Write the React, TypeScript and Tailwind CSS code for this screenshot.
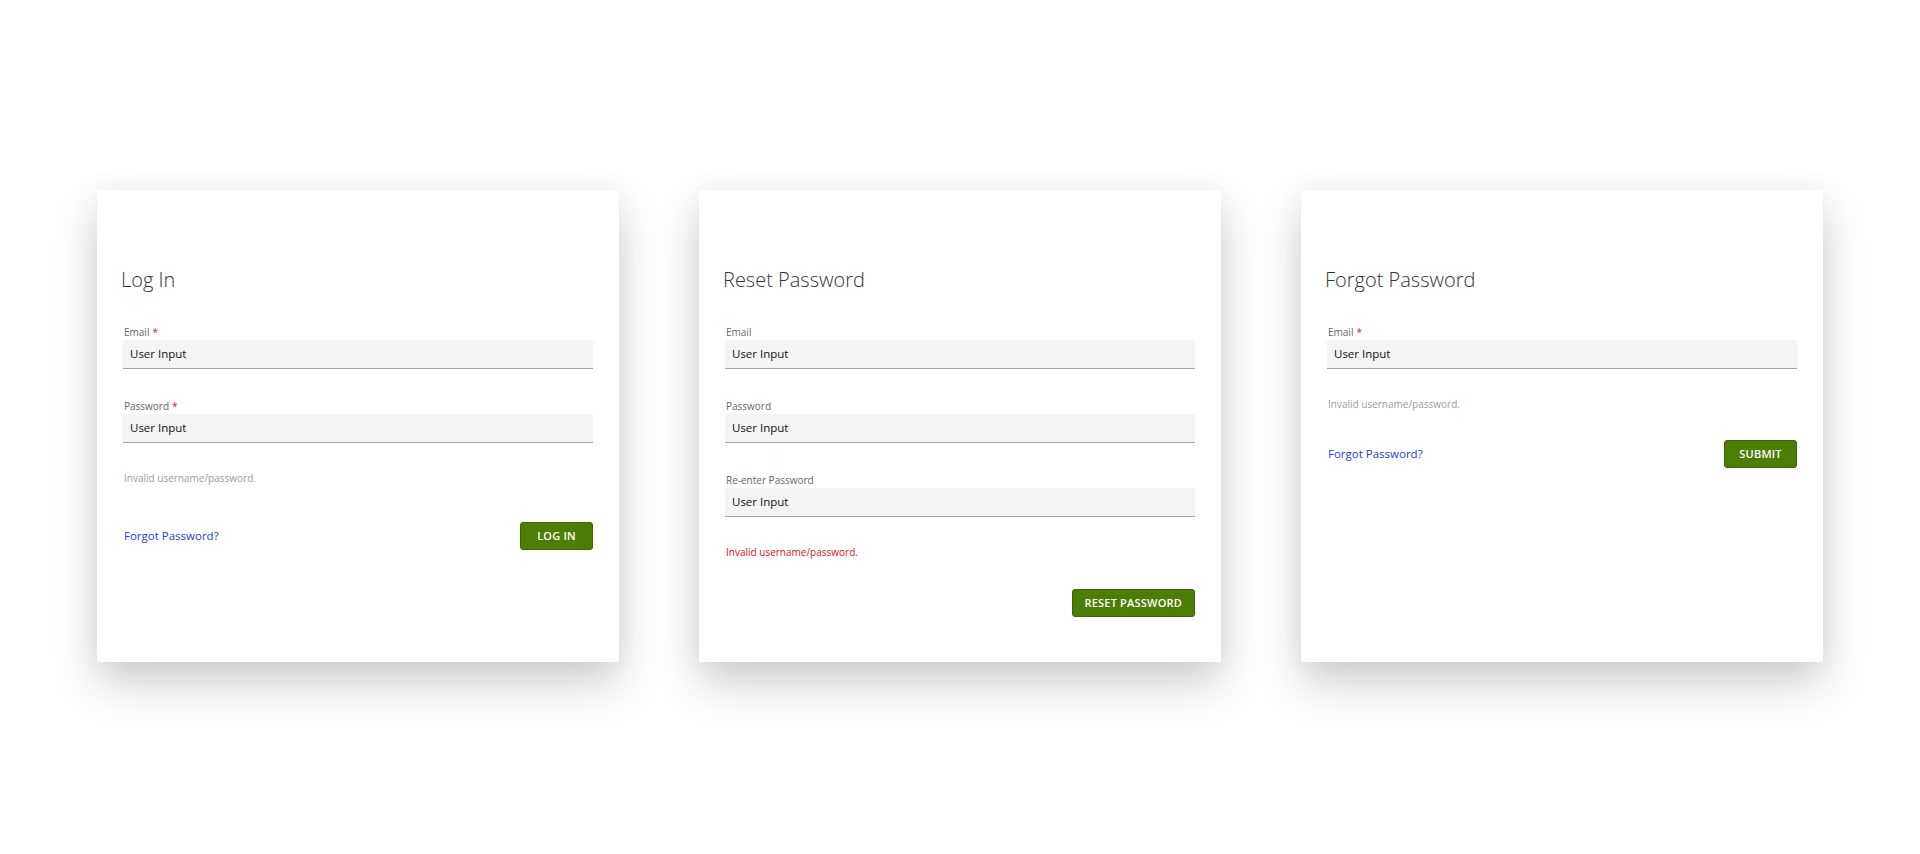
import React from 'react';

const font = { fontFamily: '"Open Sans", "Noto Sans", Arial, sans-serif' };

type FieldProps = { label: string; required?: boolean; first?: boolean };

const Field: React.FC<FieldProps> = ({ label, required, first }) => (
  <div className={first ? 'mt-[30px]' : 'mt-[29px]'}>
    <div className="h-[16px] text-[10px] leading-[16px] text-[#666] pl-[1px]">
      {label}
      {required && <span className="text-[#e3101c] ml-[3px]">*</span>}
    </div>
    <div className="h-[29px] bg-[#f4f4f4] border-b border-[#a5a5a5] px-[7px] flex items-center text-[11.5px] text-[#111] rounded-t-[2px]">
      User Input
    </div>
  </div>
);

const Title: React.FC<{ text: string }> = ({ text }) => (
  <h1 className="-ml-[2px] text-[20px] leading-[28px] font-light text-[#333]">{text}</h1>
);

const Button: React.FC<{ text: string }> = ({ text }) => (
  <button className="h-[28px] min-w-[73px] px-[12px] bg-[#4c7d04] border border-[#3d6600] rounded-[3px] text-white text-[11px] font-semibold tracking-[0.2px]">
    {text}
  </button>
);

const Card: React.FC<{ children: React.ReactNode }> = ({ children }) => (
  <div className="w-[522px] h-[472px] bg-white rounded-[2px] shadow-[0_22px_45px_rgba(0,0,0,0.19),0_0_30px_rgba(0,0,0,0.05)] pt-[76px] px-[26px]">
    {children}
  </div>
);

const Link: React.FC = () => (
  <a className="text-[11.5px] text-[#1f3ae6] pl-[1px]">Forgot Password?</a>
);

export default function App() {
  return (
    <div className="min-h-screen bg-white" style={font}>
      <div className="flex justify-center gap-[80px] pt-[190px]">
        <Card>
          <Title text="Log In" />
          <Field label="Email" required first />
          <Field label="Password" required />
          <div className="mt-[27px] h-[16px] text-[10px] leading-[16px] text-[#9b9b9b] pl-[1px]">
            Invalid username/password.
          </div>
          <div className="mt-[36px] flex items-center justify-between">
            <Link />
            <Button text="LOG IN" />
          </div>
        </Card>

        <Card>
          <Title text="Reset Password" />
          <Field label="Email" first />
          <Field label="Password" />
          <Field label="Re-enter Password" />
          <div className="mt-[27px] h-[16px] text-[10px] leading-[16px] text-[#e3101c] pl-[1px]">
            Invalid username/password.
          </div>
          <div className="mt-[29px] flex items-center justify-end">
            <Button text="RESET PASSWORD" />
          </div>
        </Card>

        <Card>
          <Title text="Forgot Password" />
          <Field label="Email" required first />
          <div className="mt-[27px] h-[16px] text-[10px] leading-[16px] text-[#9b9b9b] pl-[1px]">
            Invalid username/password.
          </div>
          <div className="mt-[28px] flex items-center justify-between">
            <Link />
            <Button text="SUBMIT" />
          </div>
        </Card>
      </div>
    </div>
  );
}
